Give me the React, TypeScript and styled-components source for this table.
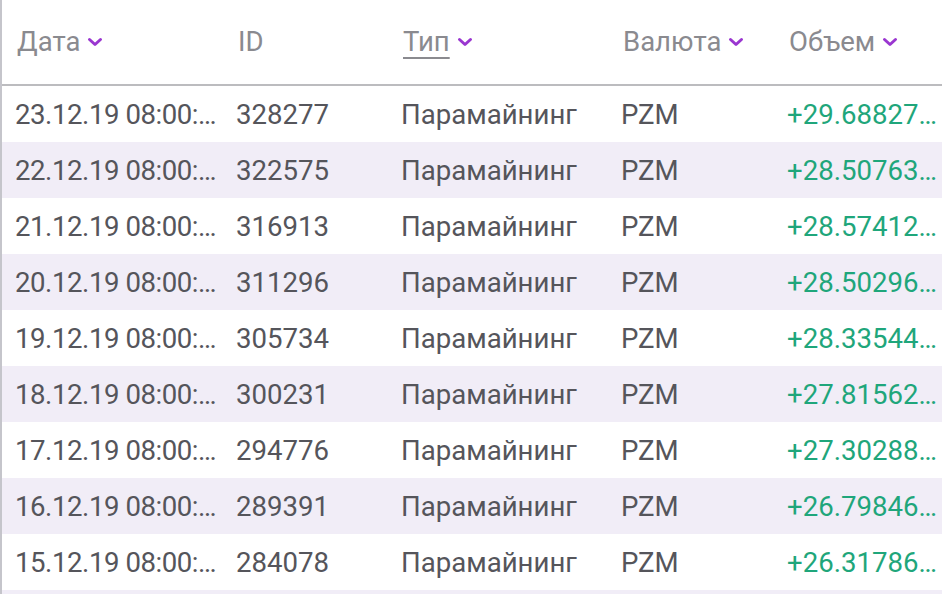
import * as React from 'react';
import styled, { createGlobalStyle } from 'styled-components';

interface Transaction {
    date: string;
    id: string;
    type: string;
    currency: string;
    amount: string;
}

const GlobalStyle = createGlobalStyle`
    html, body {
        margin: 0;
        padding: 0;
        background: #ffffff;
        overflow: hidden;
    }
    body {
        font-family: Roboto, 'Noto Sans', Arial, sans-serif;
        -webkit-font-smoothing: antialiased;
    }
`;

const COLUMNS = '221px 165px 220px 166px 1fr';

const Table = styled.div`
    width: 942px;
    height: 594px;
    border-left: 2px solid #c5c5cb;
    box-sizing: border-box;
    overflow: hidden;
`;

const HeaderRow = styled.div`
    display: grid;
    grid-template-columns: ${COLUMNS};
    height: 84px;
    border-bottom: 2px solid #bcbcbf;
`;

const HeaderCell = styled.div`
    display: flex;
    align-items: center;
    gap: 7px;
    padding-left: 15px;
    padding-bottom: 1px;
    font-size: 27.5px;
    color: #8a8a8f;
`;

const HeaderLabel = styled.span<{ $active?: boolean }>`
    text-decoration: ${(props) => (props.$active ? 'underline' : 'none')};
    text-decoration-color: #8a8a8f;
    text-decoration-thickness: 2px;
    text-underline-offset: 6px;
`;

const Row = styled.div<{ $striped: boolean }>`
    display: grid;
    grid-template-columns: ${COLUMNS};
    height: 56px;
    align-items: center;
    background: ${(props) => (props.$striped ? '#f1edf7' : '#ffffff')};
`;

const Cell = styled.div<{ $positive?: boolean; $compact?: boolean }>`
    padding-left: 13px;
    padding-top: 1px;
    font-size: 27.6px;
    letter-spacing: ${(props) => (props.$compact ? '-0.45px' : '0')};
    color: ${(props) => (props.$positive ? '#1fa67b' : '#55555b')};
    white-space: nowrap;
    overflow: hidden;
    text-overflow: ellipsis;
`;

function Chevron(): JSX.Element {
    return (
        <svg width="16" height="10" viewBox="0 0 16 10">
            <path d="M2.5 2.5 L8 7.5 L13.5 2.5" fill="none" stroke="#9a36d0" strokeWidth="3" strokeLinecap="round" strokeLinejoin="round" />
        </svg>
    );
}

const transactions: Transaction[] = [
    { date: '23.12.19 08:00:00', id: '328277', type: 'Парамайнинг', currency: 'PZM', amount: '+29.68827641' },
    { date: '22.12.19 08:00:00', id: '322575', type: 'Парамайнинг', currency: 'PZM', amount: '+28.50763112' },
    { date: '21.12.19 08:00:00', id: '316913', type: 'Парамайнинг', currency: 'PZM', amount: '+28.57412209' },
    { date: '20.12.19 08:00:00', id: '311296', type: 'Парамайнинг', currency: 'PZM', amount: '+28.50296874' },
    { date: '19.12.19 08:00:00', id: '305734', type: 'Парамайнинг', currency: 'PZM', amount: '+28.33544530' },
    { date: '18.12.19 08:00:00', id: '300231', type: 'Парамайнинг', currency: 'PZM', amount: '+27.81562093' },
    { date: '17.12.19 08:00:00', id: '294776', type: 'Парамайнинг', currency: 'PZM', amount: '+27.30288417' },
    { date: '16.12.19 08:00:00', id: '289391', type: 'Парамайнинг', currency: 'PZM', amount: '+26.79846325' },
    { date: '15.12.19 08:00:00', id: '284078', type: 'Парамайнинг', currency: 'PZM', amount: '+26.31786950' },
    { date: '14.12.19 08:00:00', id: '278830', type: 'Парамайнинг', currency: 'PZM', amount: '+25.84311276' }
];

const headers = [
    { label: 'Дата', sortable: true },
    { label: 'ID', sortable: false },
    { label: 'Тип', sortable: true, active: true },
    { label: 'Валюта', sortable: true },
    { label: 'Объем', sortable: true }
];

export default function App(): JSX.Element {
    return (
        <>
            <GlobalStyle />
            <Table>
                <HeaderRow>
                    {headers.map((header) => (
                        <HeaderCell key={header.label}>
                            <HeaderLabel $active={header.active}>{header.label}</HeaderLabel>
                            {header.sortable && <Chevron />}
                        </HeaderCell>
                    ))}
                </HeaderRow>
                {transactions.map((tx, index) => (
                    <Row key={tx.id} $striped={index % 2 === 1}>
                        <Cell $compact>{tx.date}</Cell>
                        <Cell>{tx.id}</Cell>
                        <Cell>{tx.type}</Cell>
                        <Cell>{tx.currency}</Cell>
                        <Cell $positive>{tx.amount}</Cell>
                    </Row>
                ))}
            </Table>
        </>
    );
}
